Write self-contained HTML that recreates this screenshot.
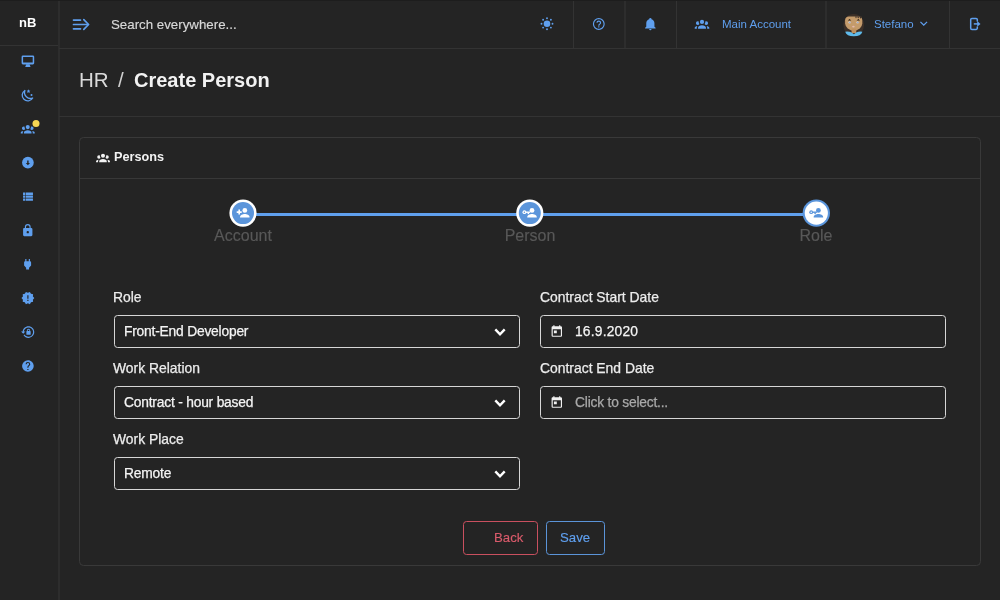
<!DOCTYPE html>
<html><head><meta charset="utf-8">
<style>
*{box-sizing:border-box;margin:0;padding:0}
html,body{width:1000px;height:600px;overflow:hidden;background:#242424;font-family:"Liberation Sans",sans-serif;color:#e8e8e8}
.a{position:absolute}
.ln{position:absolute;background:#333}
.t{position:absolute;white-space:nowrap;line-height:1;will-change:transform}
.label{font-size:13.9px;color:#ececec;-webkit-text-stroke:0.25px #ececec}
.field{position:absolute;height:33.8px;border:1.6px solid #d6d6d6;border-radius:3.5px}
.ftxt{font-size:13.8px;letter-spacing:-0.2px;color:#f4f4f4;-webkit-text-stroke:0.25px currentColor}
.steplbl{font-size:16px;color:#585858;-webkit-text-stroke:0.15px #585858;text-align:center;width:120px}
.btn{position:absolute;height:34px;border:1.7px solid;border-radius:3.5px}
</style></head><body>
<div class="ln" style="left:0;top:0;width:1000px;height:1px;background:#1d1d1d"></div>
<div class="ln" style="left:58px;top:1px;width:2px;height:599px;background:#2d2d2d"></div>
<div class="ln" style="left:0;top:45px;width:58px;height:1px"></div>
<div class="ln" style="left:59px;top:48px;width:941px;height:1px"></div>
<div class="ln" style="left:573px;top:1px;width:1px;height:47px"></div>
<div class="ln" style="left:624px;top:1px;width:2px;height:47px;background:#2d2d2d"></div>
<div class="ln" style="left:676px;top:1px;width:1px;height:47px"></div>
<div class="ln" style="left:825px;top:1px;width:2px;height:47px;background:#2d2d2d"></div>
<div class="ln" style="left:949px;top:1px;width:1px;height:47px"></div>
<div class="ln" style="left:59px;top:116px;width:941px;height:1px"></div>

<div class="t" style="left:19px;top:16px;font-size:13px;font-weight:bold;color:#fff">nB</div>
<div class="t" style="left:111px;top:17px;font-size:13.3px;color:#d8d8d8;-webkit-text-stroke:0.15px #d8d8d8;margin-top:0.5px">Search everywhere...</div>
<div class="t" style="left:722px;top:18.5px;font-size:11.5px;color:#5f9fee">Main Account</div>
<div class="t" style="left:874px;top:18.5px;font-size:11.5px;color:#5f9fee">Stefano</div>

<div class="t" style="left:79px;top:70px;font-size:20.5px;color:#dadada">HR</div>
<div class="t" style="left:118px;top:70px;font-size:20.5px;color:#d0d0d0">/</div>
<div class="t" style="left:134px;top:70px;font-size:20px;font-weight:bold;color:#f2f2f2">Create Person</div>

<div class="a" style="left:79px;top:137px;width:902px;height:429px;border:1px solid #393939;border-radius:4.5px"></div>
<div class="ln" style="left:80px;top:178px;width:900px;height:1px;background:#383838"></div>
<div class="t" style="left:114px;top:151px;font-size:12.7px;font-weight:bold;color:#f2f2f2">Persons</div>

<div class="t steplbl" style="left:183px;top:227.5px">Account</div>
<div class="t steplbl" style="left:469.8px;top:227.5px">Person</div>
<div class="t steplbl" style="left:756.3px;top:227.5px">Role</div>

<div class="t label" style="left:113px;top:290.5px">Role</div>
<div class="field" style="left:113.5px;top:314.7px;width:406px"></div>
<div class="t ftxt" style="left:123.5px;top:324.5px">Front-End Developer</div>
<div class="t label" style="left:113px;top:361.5px">Work Relation</div>
<div class="field" style="left:113.5px;top:385.7px;width:406px"></div>
<div class="t ftxt" style="left:123.5px;top:395.5px">Contract - hour based</div>
<div class="t label" style="left:113px;top:432.5px">Work Place</div>
<div class="field" style="left:113.5px;top:456.7px;width:406px"></div>
<div class="t ftxt" style="left:123.5px;top:466.5px">Remote</div>

<div class="t label" style="left:539.5px;top:290.5px">Contract Start Date</div>
<div class="field" style="left:539.5px;top:314.7px;width:406px"></div>
<div class="t ftxt" style="left:574.5px;top:324.5px;letter-spacing:0.2px">16.9.2020</div>
<div class="t label" style="left:539.5px;top:361.5px">Contract End Date</div>
<div class="field" style="left:539.5px;top:385.7px;width:406px"></div>
<div class="t ftxt" style="left:574.5px;top:395.5px;color:#a9a9a9">Click to select...</div>

<div class="btn" style="left:463px;top:521px;width:75px;border-color:#c9505f"></div>
<div class="t" style="left:493.5px;top:530.5px;font-size:13.2px;color:#d95b6b;-webkit-text-stroke:0.15px #d95b6b">Back</div>
<div class="btn" style="left:546px;top:521px;width:59px;border-color:#5b94d9"></div>
<div class="t" style="left:559.5px;top:530.5px;font-size:13.2px;color:#5f9fee;-webkit-text-stroke:0.15px #5f9fee">Save</div>
<svg class="a" style="left:0;top:0" width="1000" height="600" viewBox="0 0 1000 600"><g fill="#5f9fee">
<path fill-rule="evenodd" d="M22.9,55.4H32.9A1.3,1.3 0 0 1 34.2,56.7V63.1A1.3,1.3 0 0 1 32.9,64.4H22.9A1.3,1.3 0 0 1 21.6,63.1V56.7A1.3,1.3 0 0 1 22.9,55.4ZM23.1,56.9V62.5H32.7V56.9Z"/>
<path d="M26.3,64.2H29.5L30.6,67H25.2Z"/>
</g>
<g><path d="M24.9,90.5A5.6,5.6 0 1,0 32.7,98A5.93,5.93 0 0,1 24.9,90.5Z" fill="none" stroke="#5f9fee" stroke-width="1.3" stroke-linejoin="round"/>
<path fill="#5f9fee" d="M28.5,89.3L29.05,90.6L30.4,90.7L29.4,91.6L29.7,93L28.5,92.3L27.3,93L27.6,91.6L26.6,90.7L27.95,90.6Z"/>
<circle cx="31.5" cy="95" r="1" fill="#5f9fee"/></g>
<path transform="translate(20.75,121.86) scale(0.5833)" fill="#5f9fee" d="M12,5.5A3.5,3.5 0 0,1 15.5,9A3.5,3.5 0 0,1 12,12.5A3.5,3.5 0 0,1 8.5,9A3.5,3.5 0 0,1 12,5.5M5,8C5.56,8 6.08,8.15 6.53,8.42C6.38,9.85 6.8,11.27 7.66,12.38C7.16,13.34 6.16,14 5,14A3,3 0 0,1 2,11A3,3 0 0,1 5,8M19,8A3,3 0 0,1 22,11A3,3 0 0,1 19,14C17.84,14 16.84,13.34 16.34,12.38C17.2,11.27 17.62,9.85 17.47,8.42C17.92,8.15 18.440,8 19,8M5.5,18.25C5.5,16.18 8.41,14.5 12,14.5C15.59,14.5 18.5,16.18 18.5,18.25V20H5.5V18.25M0,20V18.5C0,17.11 1.89,15.94 4.45,15.6C3.86,16.28 3.5,17.22 3.5,18.25V20H0M24,20H20.5V18.25C20.5,17.22 20.14,16.28 19.55,15.6C22.11,15.94 24,17.11 24,18.5V20Z"/>
<circle cx="36" cy="123.4" r="3.5" fill="#f5d653"/>
<circle cx="27.9" cy="162.7" r="5.85" fill="#5f9fee"/><path fill="#242424" d="M27.2,160.6H28.6V163H30L27.9,165.2L25.8,163H27.2Z"/>
<path transform="translate(20.71,189.70) scale(0.5833)" fill="#5f9fee" d="M9,5V9H21V5M9,19H21V15H9M9,14H21V10H9M4,9H8V5H4M4,19H8V15H4M4,14H8V10H4V14Z"/>
<path transform="translate(20.75,223.44) scale(0.5833)" fill="#5f9fee" d="M12,17A2,2 0 0,0 14,15C14,13.89 13.1,13 12,13A2,2 0 0,0 10,15A2,2 0 0,0 12,17M18,8A2,2 0 0,1 20,10V20A2,2 0 0,1 18,22H6A2,2 0 0,1 4,20V10C4,8.89 4.9,8 6,8H7V6A5,5 0 0,1 12,1A5,5 0 0,1 17,6V8H18M12,3A3,3 0 0,0 9,6V8H15V6A3,3 0 0,0 12,3Z"/>
<path transform="translate(20.60,257.15) scale(0.5833)" fill="#5f9fee" d="M16,7V3H14V7H10V3H8V7H8C7,7 6,8 6,9V14.5L9.5,18V21H14.5V18L18,14.5V9C18,8 17,7 16,7Z"/>
<path transform="translate(20.90,291.10) scale(0.5833)" fill="#5f9fee" d="M23,12L20.56,9.22L20.9,5.54L17.29,4.72L15.4,1.54L12,3L8.6,1.54L6.71,4.72L3.1,5.53L3.44,9.21L1,12L3.44,14.78L3.1,18.47L6.71,19.29L8.6,22.47L12,21L15.4,22.46L17.29,19.28L20.9,18.46L20.56,14.78L23,12M13,17H11V15H13V17M13,13H11V7H13V13Z"/>
<path transform="translate(21.05,325.10) scale(0.5833)" fill="#5f9fee" d="M12.63,2C18.16,2 22.64,6.5 22.64,12C22.64,17.5 18.16,22 12.63,22C9.12,22 6.05,20.18 4.26,17.43L5.84,16.18C7.25,18.47 9.76,20 12.64,20A8,8 0 0,0 20.64,12A8,8 0 0,0 12.64,4C8.56,4 5.2,7.06 4.71,11H7.47L3.73,14.73L0,11H2.69C3.19,5.95 7.45,2 12.63,2M15.59,10.24C16.09,10.25 16.5,10.65 16.5,11.16V15.77C16.5,16.27 16.09,16.69 15.58,16.69H10.05C9.54,16.69 9.13,16.27 9.13,15.77V11.16C9.13,10.65 9.54,10.25 10.04,10.24V9.23C10.04,7.7 11.29,6.46 12.81,6.46C14.34,6.46 15.59,7.7 15.59,9.23V10.24M12.81,7.86C12.06,7.86 11.44,8.47 11.44,9.23V10.24H14.19V9.23C14.19,8.47 13.57,7.86 12.81,7.86Z"/>
<path transform="translate(20.90,359.00) scale(0.5833)" fill="#5f9fee" d="M15.07,11.25L14.17,12.17C13.45,12.89 13,13.5 13,15H11V14.5C11,13.39 11.45,12.39 12.17,11.67L13.41,10.41C13.78,10.05 14,9.55 14,9C14,7.89 13.1,7 12,7A2,2 0 0,0 10,9H8A4,4 0 0,1 12,5A4,4 0 0,1 16,9C16,9.88 15.64,10.67 15.07,11.25M13,19H11V17H13M12,2A10,10 0 0,0 2,12A10,10 0 0,0 12,22A10,10 0 0,0 22,12C22,6.470 17.5,2 12,2Z"/>
<g stroke="#5f9fee" stroke-width="1.7" stroke-linecap="round" fill="none">
<line x1="73.5" y1="20.1" x2="80.5" y2="20.1"/><line x1="73.5" y1="24.5" x2="87.6" y2="24.5"/><line x1="73.5" y1="28.8" x2="80.5" y2="28.8"/>
<polyline points="83.8,19.7 88.6,24.5 83.8,29.3" stroke-linejoin="round"/></g>
<circle cx="547" cy="23.7" r="3.3" fill="#5f9fee"/><circle cx="547.00" cy="18.20" r="0.95" fill="#5f9fee"/><circle cx="550.89" cy="19.81" r="0.95" fill="#5f9fee"/><circle cx="552.50" cy="23.70" r="0.95" fill="#5f9fee"/><circle cx="550.89" cy="27.59" r="0.95" fill="#5f9fee"/><circle cx="547.00" cy="29.20" r="0.95" fill="#5f9fee"/><circle cx="543.11" cy="27.59" r="0.95" fill="#5f9fee"/><circle cx="541.50" cy="23.70" r="0.95" fill="#5f9fee"/><circle cx="543.11" cy="19.81" r="0.95" fill="#5f9fee"/>
<path transform="translate(591.70,16.90) scale(0.5917)" fill="#5f9fee" d="M11,18H13V16H11V18M12,2A10,10 0 0,0 2,12A10,10 0 0,0 12,22A10,10 0 0,0 22,12A10,10 0 0,0 12,2M12,20C7.59,20 4,16.41 4,12C4,7.59 7.59,4 12,4C16.41,4 20,7.59 20,12C20,16.41 16.41,20 12,20M12,6A4,4 0 0,0 8,10H10A2,2 0 0,1 12,8A2,2 0 0,1 14,10C14,12 11,11.75 11,15H13C13,12.75 16,12.5 16,10A4,4 0 0,0 12,6Z"/>
<path transform="translate(643.35,16.71) scale(0.5833)" fill="#5f9fee" d="M21,19V20H3V19L5,17V11C5,7.9 7.03,5.17 10,4.29C10,4.19 10,4.1 10,4A2,2 0 0,1 12,2A2,2 0 0,1 14,4C14,4.1 14,4.19 14,4.29C16.97,5.17 19,7.9 19,11V17L21,19M14,21A2,2 0 0,1 12,23A2,2 0 0,1 10,21"/>
<path transform="translate(694.70,16.49) scale(0.6083)" fill="#5f9fee" d="M12,5.5A3.5,3.5 0 0,1 15.5,9A3.5,3.5 0 0,1 12,12.5A3.5,3.5 0 0,1 8.5,9A3.5,3.5 0 0,1 12,5.5M5,8C5.56,8 6.08,8.15 6.53,8.42C6.38,9.85 6.8,11.27 7.66,12.38C7.16,13.34 6.16,14 5,14A3,3 0 0,1 2,11A3,3 0 0,1 5,8M19,8A3,3 0 0,1 22,11A3,3 0 0,1 19,14C17.84,14 16.84,13.34 16.34,12.38C17.2,11.27 17.62,9.85 17.47,8.42C17.92,8.15 18.440,8 19,8M5.5,18.25C5.5,16.18 8.41,14.5 12,14.5C15.59,14.5 18.5,16.18 18.5,18.25V20H5.5V18.25M0,20V18.5C0,17.11 1.89,15.94 4.45,15.6C3.86,16.28 3.5,17.22 3.5,18.25V20H0M24,20H20.5V18.25C20.5,17.22 20.14,16.28 19.55,15.6C22.11,15.94 24,17.11 24,18.5V20Z"/>
<path transform="translate(916.25,16.11) scale(0.6250)" fill="#5f9fee" d="M7.41,8.58L12,13.17L16.59,8.58L18,10L12,16L6,10L7.41,8.58Z"/>
<g fill="none" stroke="#5f9fee" stroke-width="1.5"><path d="M977.3,21.4V19.6A1.2,1.2 0 0 0 976.1,18.4H971.9A1.2,1.2 0 0 0 970.7,19.6V28.2A1.2,1.2 0 0 0 971.9,29.4H976.1A1.2,1.2 0 0 0 977.3,28.2V26.4"/>
<line x1="973.8" y1="23.9" x2="978.2" y2="23.9"/></g><path fill="#5f9fee" d="M977.2,21.1L980.5,23.9L977.2,26.7Z"/>
<g>
<ellipse cx="853.7" cy="25.1" rx="10.4" ry="11.2" fill="#3c3028"/>
<path d="M845.1,20.2 Q845.4,16.8 848.8,16.6 L858.8,16.6 Q862.1,16.9 862.3,20.4 L862.3,23.5 Q862,26.8 859.8,28.4 L856.2,30.6 L851.3,30.6 L847.7,28.4 Q845.4,26.8 845.1,23.5 Z" fill="#c49b6b"/>
<path d="M855,16.4 L856,18.4 L857,16.6 L858.2,18.6 L859.3,16.7 L860.5,18.8 L861.6,17.2 L862.4,16.4 Z" fill="#3c3028"/>
<rect x="851.6" y="28.5" width="4.6" height="4.6" fill="#bf915e"/>
<path d="M845.2,31.8 Q848.5,31.2 851.6,32.6 L853.9,34.2 L856.2,32.6 Q859.3,31.2 862.4,31.8 Q861,36.3 853.8,36.3 Q846.6,36.3 845.2,31.8Z" fill="#5fbbec"/>
<path d="M847.8,20.6L849.6,18.9L851.2,20.6Z M856.6,20.6L858.3,18.9L860,20.6Z" fill="#2a2018"/>
<ellipse cx="849.6" cy="22.4" rx="1.1" ry="0.9" fill="#e8f0ff"/><ellipse cx="857.6" cy="22.4" rx="1.1" ry="0.9" fill="#e8f0ff"/>
<circle cx="849.9" cy="22.5" r="0.5" fill="#4a6ab0"/><circle cx="857.9" cy="22.5" r="0.5" fill="#4a6ab0"/>
<ellipse cx="853.4" cy="26.6" rx="1.3" ry="0.9" fill="#e3b8ae"/>
</g>
<path transform="translate(96.05,150.62) scale(0.5792)" fill="#f2f2f2" d="M12,5.5A3.5,3.5 0 0,1 15.5,9A3.5,3.5 0 0,1 12,12.5A3.5,3.5 0 0,1 8.5,9A3.5,3.5 0 0,1 12,5.5M5,8C5.56,8 6.08,8.15 6.53,8.42C6.38,9.85 6.8,11.27 7.66,12.38C7.16,13.34 6.16,14 5,14A3,3 0 0,1 2,11A3,3 0 0,1 5,8M19,8A3,3 0 0,1 22,11A3,3 0 0,1 19,14C17.84,14 16.84,13.34 16.34,12.38C17.2,11.27 17.62,9.85 17.47,8.42C17.92,8.15 18.440,8 19,8M5.5,18.25C5.5,16.18 8.41,14.5 12,14.5C15.59,14.5 18.5,16.18 18.5,18.25V20H5.5V18.25M0,20V18.5C0,17.11 1.89,15.94 4.45,15.6C3.86,16.28 3.5,17.22 3.5,18.25V20H0M24,20H20.5V18.25C20.5,17.22 20.14,16.28 19.55,15.6C22.11,15.94 24,17.11 24,18.5V20Z"/>
<path transform="translate(549.85,324.63) scale(0.5792)" fill="#f0f0f0" d="M7,10H12V15H7M19,19H5V8H19M19,3H18V1H16V3H8V1H6V3H5C3.89,3 3,3.9 3,5V19A2,2 0 0,0 5,21H19A2,2 0 0,0 21,19V5A2,2 0 0,0 19,3Z"/>
<path transform="translate(549.85,395.63) scale(0.5792)" fill="#f0f0f0" d="M7,10H12V15H7M19,19H5V8H19M19,3H18V1H16V3H8V1H6V3H5C3.89,3 3,3.9 3,5V19A2,2 0 0,0 5,21H19A2,2 0 0,0 21,19V5A2,2 0 0,0 19,3Z"/>
<polyline points="495.3,329.4 500,334.29999999999995 504.7,329.4" fill="none" stroke="#ffffff" stroke-width="2.4" stroke-linejoin="miter"/>
<polyline points="495.3,400.4 500,405.29999999999995 504.7,400.4" fill="none" stroke="#ffffff" stroke-width="2.4" stroke-linejoin="miter"/>
<polyline points="495.3,471.4 500,476.29999999999995 504.7,471.4" fill="none" stroke="#ffffff" stroke-width="2.4" stroke-linejoin="miter"/>
<rect x="243" y="213" width="573" height="3" fill="#5fa0ee"/>
<circle cx="243" cy="213.1" r="13.6" fill="#fff"/><circle cx="243" cy="213.1" r="11" fill="#5b95db"/>
<circle cx="529.8" cy="213.1" r="13.6" fill="#fff"/><circle cx="529.8" cy="213.1" r="11" fill="#5b95db"/>
<circle cx="816.3" cy="213.1" r="13.7" fill="#5b95db"/><circle cx="816.3" cy="213.1" r="11.6" fill="#fff"/>
<path d="M238.4,209.6H240V211.3H241.7V212.9H240V214.6H238.4V212.9H236.7V211.3H238.4Z" fill="#fff"/>
<circle cx="244.8" cy="210.4" r="2.4" fill="#fff"/><path d="M240.0,217.4C240.0,215 242.8,214.1 244.8,214.1C246.8,214.1 249.60000000000002,215 249.60000000000002,217.4Z" fill="#fff"/>
<circle cx="524.4" cy="212.2" r="1.9" fill="#fff"/><circle cx="524.4" cy="212.2" r="0.75" fill="#5b95db"/><rect x="525.8" y="211.5" width="4.3" height="1.4" fill="#fff"/><rect x="527.6" y="212.5" width="1.4" height="1.6" fill="#fff"/>
<circle cx="532" cy="210.4" r="2.4" fill="#fff"/><path d="M527.2,217.4C527.2,215 530,214.1 532,214.1C534,214.1 536.8,215 536.8,217.4Z" fill="#fff"/>
<circle cx="811.2" cy="212.2" r="1.9" fill="#5b95db"/><circle cx="811.2" cy="212.2" r="0.75" fill="#fff"/><rect x="812.6" y="211.5" width="4.3" height="1.4" fill="#5b95db"/><rect x="814.4000000000001" y="212.5" width="1.4" height="1.6" fill="#5b95db"/>
<circle cx="818.4" cy="210.4" r="2.4" fill="#5b95db"/><path d="M813.6,217.4C813.6,215 816.4,214.1 818.4,214.1C820.4,214.1 823.1999999999999,215 823.1999999999999,217.4Z" fill="#5b95db"/></svg>
</body></html>
